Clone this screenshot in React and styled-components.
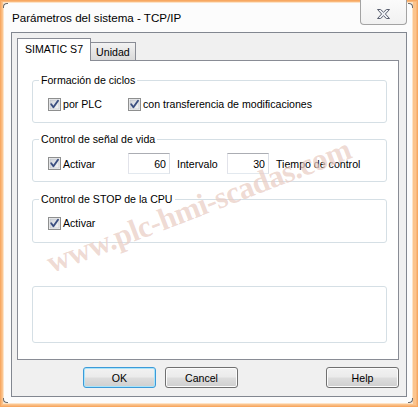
import React from 'react';
import styled, { createGlobalStyle } from 'styled-components';

const GlobalStyle = createGlobalStyle`
  html, body {
    margin: 0;
    padding: 0;
  }
  body {
    background: #fbc48e;
    font-family: 'Liberation Sans', Arial, sans-serif;
  }
`;

const App = () => {
  return (
    <>
      <GlobalStyle />
      <Window>
        <Frame>
          <TitleBar>
            <Title>Parámetros del sistema - TCP/IP</Title>
            <CloseButton>
              <svg width="13" height="10" viewBox="0 0 13 10">
                <polygon
                  points="0.5,0.5 3.6,0.5 6.5,3.2 9.4,0.5 12.5,0.5 8.4,5 12.5,9.5 9.4,9.5 6.5,6.8 3.6,9.5 0.5,9.5 4.6,5"
                  fill="#eef0f4"
                  stroke="#5a6070"
                  strokeWidth="1"
                  strokeLinejoin="round"
                />
              </svg>
            </CloseButton>
          </TitleBar>
          <Client>
            <TabStrip>
              <Tab $active>SIMATIC S7</Tab>
              <Tab>Unidad</Tab>
            </TabStrip>
            <TabPanel>
              <Group $pt={9} $pb={10}>
                <Legend>Formación de ciclos</Legend>
                <Row $h={16}>
                  <CheckItem $w={80}>
                    <CheckBox />
                    <span>por PLC</span>
                  </CheckItem>
                  <CheckItem>
                    <CheckBox />
                    <span>con transferencia de modificaciones</span>
                  </CheckItem>
                </Row>
              </Group>

              <Group $mt={9} $pt={7} $pb={7}>
                <Legend>Control de señal de vida</Legend>
                <Row $h={21}>
                  <CheckItem $w={80}>
                    <CheckBox />
                    <span>Activar</span>
                  </CheckItem>
                  <NumberBox readOnly value="60" />
                  <FieldLabel $w={50}>Intervalo</FieldLabel>
                  <NumberBox readOnly value="30" />
                  <FieldLabel>Tiempo de control</FieldLabel>
                </Row>
              </Group>

              <Group $mt={10} $pt={9} $pb={11}>
                <Legend>Control de STOP de la CPU</Legend>
                <Row $h={16}>
                  <CheckItem>
                    <CheckBox />
                    <span>Activar</span>
                  </CheckItem>
                </Row>
              </Group>

              <EmptyGroup />
            </TabPanel>
            <ButtonRow>
              <Button $default>OK</Button>
              <Button>Cancel</Button>
              <Button $push>Help</Button>
            </ButtonRow>
          </Client>
        </Frame>
        <Corner $pos="tl" />
        <Corner $pos="tr" />
        <Corner $pos="bl" />
        <Corner $pos="br" />
        <Watermark>www.plc-hmi-scadas.com</Watermark>
      </Window>
    </>
  );
};

const CheckBox = () => (
  <CheckSvg width="13" height="13" viewBox="0 0 13 13">
    <defs>
      <linearGradient id="cbfill" x1="0" y1="0" x2="1" y2="1">
        <stop offset="0" stopColor="#cfd3da" />
        <stop offset="1" stopColor="#f7f7f7" />
      </linearGradient>
    </defs>
    <rect x="0.5" y="0.5" width="12" height="12" fill="#f4f4f4" stroke="#8e8f8f" />
    <rect x="2" y="2" width="9" height="9" fill="url(#cbfill)" stroke="#b8bcc4" strokeWidth="0.6" />
    <path d="M3.2 6.2 L5.4 9.2 L10 2.8" fill="none" stroke="#3b4f81" strokeWidth="1.9" strokeLinecap="round" strokeLinejoin="round" />
  </CheckSvg>
);

export default App;

const Window = styled.div`
  position: relative;
  width: 418px;
  height: 407px;
  box-sizing: border-box;
  padding: 3px 6px 4px 4px;
  overflow: hidden;
  background: #fbc48e;
  box-shadow: inset 0 0 0 1px #f7a862, inset 0 0 0 2px #f9b77a;
`;

const Frame = styled.div`
  height: 100%;
  display: flex;
  flex-direction: column;
  background: #fcfcfc;
  box-shadow: 0 0 0 1px #fde3c6;
`;

const Corner = styled.div`
  position: absolute;
  width: 4px;
  height: 4px;
  border: 0 solid #6b6b6b;
  ${({ $pos }) =>
    $pos === 'tl'
      ? 'top: 3px; left: 3px; border-top-width: 1px; border-left-width: 1px; border-top-left-radius: 4px;'
      : $pos === 'tr'
      ? 'top: 3px; right: 5px; border-top-width: 1px; border-right-width: 1px; border-top-right-radius: 4px;'
      : $pos === 'bl'
      ? 'bottom: 4px; left: 3px; border-bottom-width: 1px; border-left-width: 1px; border-bottom-left-radius: 4px;'
      : 'bottom: 4px; right: 5px; border-bottom-width: 1px; border-right-width: 1px; border-bottom-right-radius: 4px;'}
`;

const TitleBar = styled.div`
  height: 29px;
  flex: none;
  display: flex;
  justify-content: space-between;
  align-items: center;
`;

const Title = styled.div`
  margin-left: 8px;
  font-size: 11.6px;
  color: #000;
  white-space: nowrap;
`;

const CloseButton = styled.div`
  align-self: flex-start;
  margin-top: -3px;
  margin-right: 5px;
  width: 47px;
  height: 25px;
  box-sizing: border-box;
  display: flex;
  align-items: center;
  justify-content: center;
  padding-top: 3px;
  border: 1px solid #a3a3a3;
  border-top: none;
  border-radius: 0 0 4px 4px;
  background: linear-gradient(#fbfbfb, #f1f1f1);
`;

const Client = styled.div`
  flex: 1;
  display: flex;
  flex-direction: column;
  margin: 0 5px 6px 7px;
  padding: 5px 7px 0 5px;
  border: 1px solid #828790;
  background: #f0f0f0;
  font-size: 10.6px;
  color: #000;
`;

const TabStrip = styled.div`
  height: 22px;
  display: flex;
  align-items: flex-end;
  position: relative;
  z-index: 1;
`;

const Tab = styled.div`
  box-sizing: border-box;
  display: flex;
  align-items: center;
  border: 1px solid #898c95;
  border-bottom: none;
  white-space: nowrap;
  ${({ $active }) =>
    $active
      ? `
    height: 23px;
    margin-bottom: -1px;
    padding: 0 7px 2px 7px;
    background: #fff;
  `
      : `
    height: 18px;
    margin-left: -1px;
    padding: 1px 5px 0 5px;
    background: linear-gradient(#f3f3f3, #e6e6e6 50%, #dadada);
  `}
`;

const TabPanel = styled.div`
  height: 300px;
  box-sizing: border-box;
  padding: 12px 11px 0 14px;
  border: 1px solid #898c95;
  background: #fff;
  display: flex;
  flex-direction: column;
`;

const Group = styled.fieldset`
  margin: ${({ $mt }) => $mt || 0}px 0 0 0;
  padding: ${({ $pt }) => $pt}px 0 ${({ $pb }) => $pb}px 15px;
  border: 1px solid #d5dfe5;
  border-radius: 3px;
  min-width: 0;
`;

const Legend = styled.legend`
  margin-left: -9px;
  padding: 0 2px;
  line-height: 14px;
  font-size: 10.6px;
`;

const EmptyGroup = styled.div`
  margin-top: 43px;
  height: 57px;
  box-sizing: border-box;
  border: 1px solid #d5dfe5;
  border-radius: 3px;
`;

const Row = styled.div`
  height: ${({ $h }) => $h}px;
  display: flex;
  align-items: center;
`;

const CheckItem = styled.label`
  display: flex;
  align-items: center;
  gap: 2px;
  ${({ $w }) => ($w ? `width: ${$w}px;` : '')}
  flex: none;
  white-space: nowrap;
`;

const CheckSvg = styled.svg`
  flex: none;
  display: block;
`;

const NumberBox = styled.input`
  width: 42px;
  height: 21px;
  box-sizing: border-box;
  margin: 0;
  padding: 0 3px 0 0;
  border: 1px solid;
  border-color: #abadb3 #dbdfe6 #e3e9ef #e2e3ea;
  border-radius: 0;
  background: #fff;
  text-align: right;
  font-family: 'Liberation Sans', Arial, sans-serif;
  font-size: 10.6px;
  color: #000;
  outline: none;
`;

const FieldLabel = styled.span`
  margin-left: 7px;
  ${({ $w }) => ($w ? `width: ${$w}px;` : '')}
  flex: none;
  white-space: nowrap;
`;

const ButtonRow = styled.div`
  margin-top: 7px;
  margin-left: 66px;
  display: flex;
  gap: 9px;
`;

const Button = styled.div`
  width: 73px;
  height: 21px;
  box-sizing: border-box;
  display: flex;
  align-items: center;
  justify-content: center;
  border: 1px solid ${({ $default }) => ($default ? '#3c9ad8' : '#707070')};
  border-radius: 3px;
  background: linear-gradient(#f2f2f2 0%, #ebebeb 48%, #dddddd 52%, #cfcfcf 100%);
  box-shadow: inset 0 0 0 1px ${({ $default }) => ($default ? '#a9e4fa' : '#fcfcfc')};
  font-size: 10.6px;
  color: #000;
  ${({ $push }) => ($push ? 'margin-left: auto;' : '')}
`;

const Watermark = styled.div`
  position: absolute;
  left: 48px;
  top: 246px;
  transform: rotate(-21deg);
  transform-origin: left center;
  font-family: 'Liberation Serif', 'Times New Roman', serif;
  font-weight: bold;
  font-size: 31px;
  letter-spacing: -0.5px;
  white-space: nowrap;
  color: rgba(204, 140, 120, 0.32);
  text-shadow: 0 0 1px rgba(255, 255, 255, 0.6);
  pointer-events: none;
`;
